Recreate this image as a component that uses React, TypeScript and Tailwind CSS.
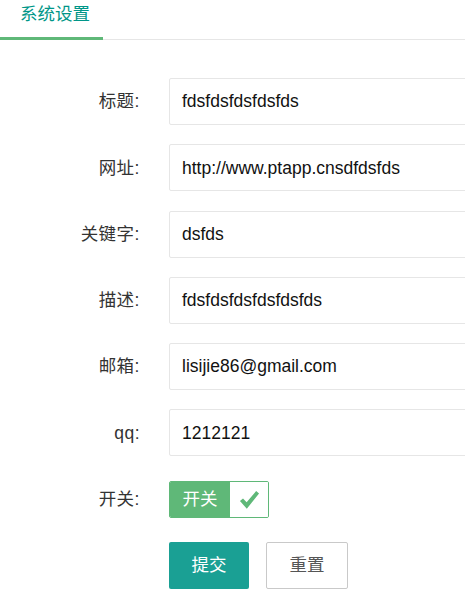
import React from 'react';

const fields = [
  { label: '标题:', value: 'fdsfdsfdsfdsfds' },
  { label: '网址:', value: 'http://www.ptapp.cnsdfdsfds' },
  { label: '关键字:', value: 'dsfds' },
  { label: '描述:', value: 'fdsfdsfdsfdsfdsfds' },
  { label: '邮箱:', value: 'lisijie86@gmail.com' },
  { label: 'qq:', value: '1212121' },
];

const CheckIcon: React.FC<{ className?: string }> = ({ className }) => (
  <svg viewBox="0 0 22 22" className={className} fill="currentColor">
    <path d="M1 12.6 L4.2 10 L8 14 L18 2 L21 4.8 L8.2 20.6 Z" />
  </svg>
);

const FormRow: React.FC<{ label: string; children: React.ReactNode }> = ({ label, children }) => (
  <div className="flex items-center mb-[19.25px]">
    <label className="w-[140px] shrink-0 text-right text-[17.5px] text-[#333] tracking-[0.5px]">{label}</label>
    <div className="ml-[29px] shrink-0">{children}</div>
  </div>
);

export default function App() {
  return (
    <div
      className="w-[465px] h-[607px] overflow-hidden bg-white"
      style={{ fontFamily: '"Liberation Sans", "Noto Sans CJK SC", sans-serif' }}
    >
      <div className="flex h-[40px] border-b border-[#e6e6e6]">
        <div className="relative -mb-px h-[40px] w-[103px] pl-[20px] border-b-[3px] border-[#5FB878] text-[17.5px] leading-[28px] text-[#009688]">
          系统设置
        </div>
      </div>

      <div className="pt-[38px]">
        {fields.map((f) => (
          <FormRow key={f.label} label={f.label}>
            <div className="flex items-center w-[330px] h-[47px] border border-[#e6e6e6] rounded-[2px] pl-[12px] text-[17.5px] text-[#111]">
              {f.value}
            </div>
          </FormRow>
        ))}

        <div className="flex items-center h-[47px] mb-[19px]">
          <label className="w-[140px] shrink-0 text-right text-[17.5px] text-[#333] tracking-[0.5px]">开关:</label>
          <div className="ml-[29px] flex h-[37px] rounded-[2px] overflow-hidden border border-[#5FB878]">
            <span className="flex items-center justify-center w-[60px] bg-[#5FB878] text-white text-[17.5px]">开关</span>
            <span className="flex items-center justify-center w-[38px] bg-white text-[#5FB878]">
              <CheckIcon className="w-[21px] h-[21px]" />
            </span>
          </div>
        </div>

        <div className="flex items-center">
          <div className="w-[140px] shrink-0" />
          <div className="ml-[29px] flex gap-[17px]">
            <button className="w-[80px] h-[47px] rounded-[2px] bg-[#1AA094] text-white text-[17.5px]">提交</button>
            <button className="w-[82px] h-[47px] rounded-[2px] border border-[#c9c9c9] bg-white text-[#555] text-[17.5px]">重置</button>
          </div>
        </div>
      </div>
    </div>
  );
}
